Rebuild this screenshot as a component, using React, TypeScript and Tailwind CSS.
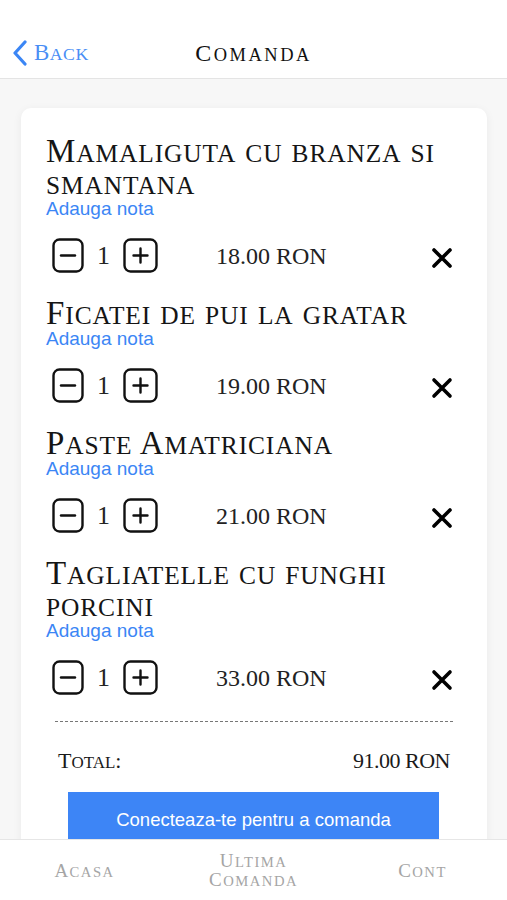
import React from 'react';

type Item = { name: string; qty: number; price: number };

const items: Item[] = [
  { name: 'Mamaliguta cu branza si smantana', qty: 1, price: 18 },
  { name: 'Ficatei de pui la gratar', qty: 1, price: 19 },
  { name: 'Paste Amatriciana', qty: 1, price: 21 },
  { name: 'Tagliatelle cu funghi porcini', qty: 1, price: 33 },
];

const serif = "font-['Liberation_Serif','Times_New_Roman',serif]";
const sans = "font-['Liberation_Sans',Arial,sans-serif]";

// lowercase letters shown as slightly smaller capitals, like the app's display face
const SmallCaps: React.FC<{ text: string }> = ({ text }) => {
  const parts = text.match(/[a-z]+|[^a-z]+/g) || [];
  return (
    <>
      {parts.map((p, i) =>
        /[a-z]/.test(p) ? (
          <span key={i} className="text-[0.77em] leading-none uppercase">
            {p}
          </span>
        ) : (
          <span key={i}>{p}</span>
        )
      )}
    </>
  );
};

const MinusBox = () => (
  <svg width="32" height="35" viewBox="0 0 32 35" fill="none" stroke="#111" strokeWidth="2.4">
    <rect x="1.5" y="1.5" width="29" height="32" rx="6" />
    <path d="M9 17.5h14" strokeLinecap="round" />
  </svg>
);

const PlusBox = () => (
  <svg width="35" height="35" viewBox="0 0 35 35" fill="none" stroke="#111" strokeWidth="2.4">
    <rect x="1.5" y="1.5" width="32" height="32" rx="6" />
    <path d="M10.5 17.5h14M17.5 10.5v14" strokeLinecap="round" />
  </svg>
);

const CloseIcon = () => (
  <svg width="22" height="22" viewBox="0 0 22 22" fill="none" stroke="#000" strokeWidth="3.6" strokeLinecap="round">
    <path d="M3 3l16 16M19 3L3 19" />
  </svg>
);

const ItemRow: React.FC<{ item: Item }> = ({ item }) => (
  <div className="pb-[24px]">
    <div className={`${serif} text-[33px] leading-[32px] tracking-[0.9px] text-[#151515]`}>
      <SmallCaps text={item.name} />
    </div>
    <div className={`${sans} text-[19px] leading-[20px] text-[#3b86f5]`}>Adauga nota</div>
    <div className="mt-[19px] flex h-[35px] items-center">
      <div className="ml-[6px] flex items-center">
        <MinusBox />
        <span className={`${serif} mx-[13px] text-[26px] leading-none text-[#222]`}>{item.qty}</span>
        <PlusBox />
      </div>
      <span className={`${serif} ml-[58px] text-[24px] leading-none text-[#222]`}>
        {item.price.toFixed(2)} RON
      </span>
      <div className="ml-auto mr-[9px] mt-[5px]">
        <CloseIcon />
      </div>
    </div>
  </div>
);

const App: React.FC = () => {
  const total = items.reduce((s, it) => s + it.price * it.qty, 0);

  return (
    <div className="flex h-[900px] w-full flex-col overflow-hidden bg-[#f7f7f7]">
      <header className="relative flex h-[79px] shrink-0 items-end border-b border-[#e4e4e4] bg-white pb-[10px]">
        <div className="flex items-center pl-[12px]">
          <svg width="18" height="26" viewBox="0 0 18 26" fill="none" stroke="#3b86f5" strokeWidth="3.2" strokeLinecap="round" strokeLinejoin="round">
            <path d="M13 2L3 13l10 11" />
          </svg>
          <span className={`${serif} ml-[4px] text-[23px] leading-[30px] tracking-[0.5px] text-[#4a8ef5]`}>
            <SmallCaps text="Back" />
          </span>
        </div>
        <div className={`${serif} pointer-events-none absolute bottom-[10px] left-0 right-0 text-center text-[24px] leading-[30px] tracking-[2.5px] text-[#111]`}>
          <SmallCaps text="Comanda" />
        </div>
      </header>

      <main className="flex-1 overflow-hidden pl-[21px] pr-[20px] pt-[29px]">
        <div className="rounded-[10px] bg-white px-[25px] pb-[20px] pt-[27px] shadow-[0_2px_10px_rgba(0,0,0,0.06)]">
          {items.map((it, i) => (
            <ItemRow key={i} item={it} />
          ))}
          <div className="mx-[9px] mt-[2px] border-t border-dashed border-[#777]" />
          <div className={`${serif} mx-[12px] mt-[25px] flex justify-between text-[22px] leading-[28px] text-[#1a1a1a]`}>
            <span>
              <SmallCaps text="Total:" />
            </span>
            <span className="tracking-[-0.5px]">{total.toFixed(2)} RON</span>
          </div>
          <button className={`${sans} ml-[22px] mr-[23px] mt-[17px] block h-[56px] w-[371px] bg-[#3d85f6] text-[18.5px] text-white`}>
            Conecteaza-te pentru a comanda
          </button>
        </div>
      </main>

      <nav className={`${serif} grid h-[61px] shrink-0 grid-cols-3 items-center border-t border-[#e6e6e6] bg-white text-center text-[19px] leading-[19px] tracking-[1.5px] text-[#a5a5a5]`}>
        <span>
          <SmallCaps text="Acasa" />
        </span>
        <span>
          <SmallCaps text="Ultima" />
          <br />
          <SmallCaps text="Comanda" />
        </span>
        <span>
          <SmallCaps text="Cont" />
        </span>
      </nav>
    </div>
  );
};

export default App;
